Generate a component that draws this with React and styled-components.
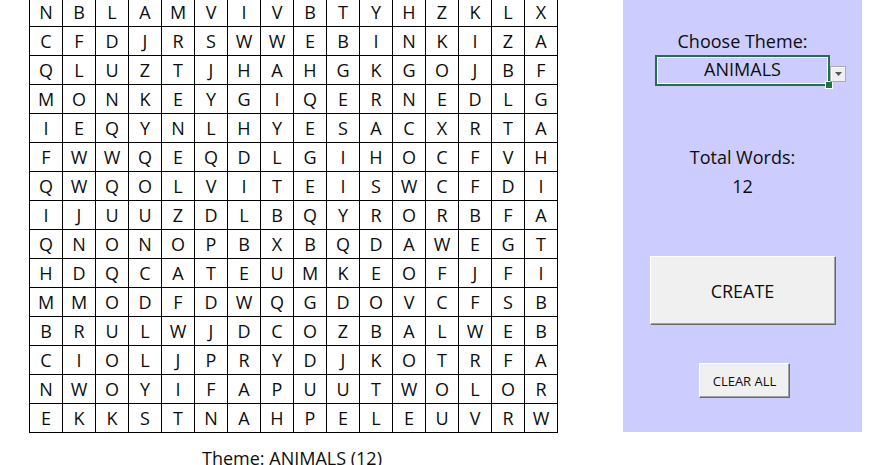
import React from "react";
import styled, { createGlobalStyle } from "styled-components";

const GlobalStyle = createGlobalStyle`
  html, body {
    margin: 0;
    padding: 0;
    background: #ffffff;
    overflow: hidden;
  }
  body {
    font-family: "Open Sans", "Liberation Sans", sans-serif;
    color: #0d0d0d;
  }
`;

const ROWS = [
  "NBLAMVIVBTYHZKLX",
  "CFDJRSWWEBINKIZA",
  "QLUZTJHAHGKGOJBF",
  "MONKEYGIQERNEDLG",
  "IEQYNLHYESACXRTA",
  "FWWQEQDLGIHOCFVH",
  "QWQOLVITEISWCFDI",
  "IJUUZDLBQYRORBFA",
  "QNONOPBXBQDAWEGT",
  "HDQCATEUMKEOFJFI",
  "MMODFDWQGDOVCFSB",
  "BRULWJDCOZBALWEB",
  "CIOLJPRYDJKOTRFA",
  "NWOYIFAPUUTWOLOR",
  "EKKSTNAHPELEUVRW",
];

const Page = styled.div`
  display: flex;
  align-items: flex-start;
  width: 885px;
  height: 465px;
  overflow: hidden;
`;

const PuzzleColumn = styled.div`
  display: flex;
  flex-direction: column;
  align-items: center;
  margin-left: 29px;
  margin-top: -3px;
`;

const Grid = styled.div`
  display: grid;
  grid-template-columns: repeat(16, 33px);
  grid-auto-rows: 29px;
  border-left: 1px solid #000;
  border-top: 1px solid #000;
`;

const Cell = styled.div`
  box-sizing: border-box;
  border-right: 1px solid #000;
  border-bottom: 1px solid #000;
  display: flex;
  align-items: center;
  justify-content: center;
  font-size: 18px;
  line-height: 28px;
  color: #0d0d0d;
`;

const Caption = styled.div`
  margin-top: 13px;
  margin-right: 3px;
  font-size: 18px;
  line-height: 25px;
  white-space: nowrap;
`;

const Panel = styled.div`
  margin-left: 65px;
  width: 239px;
  height: 432px;
  background: #ccccff;
  display: flex;
  flex-direction: column;
  align-items: center;
  padding-top: 29px;
  box-sizing: border-box;
`;

const Label = styled.div`
  font-size: 18px;
  line-height: ${(p) => p.$lh || 25}px;
  text-align: center;
  white-space: nowrap;
`;

const SelectWrap = styled.div`
  position: relative;
  margin-top: 1px;
`;

const SelectBox = styled.div`
  box-sizing: border-box;
  width: 175px;
  height: 31px;
  border: 2px solid #217346;
  box-shadow: inset 0 0 0 1px #ffffff;
  font-size: 18px;
  line-height: 25px;
  padding-bottom: 2px;
  text-align: center;
`;

const DropButton = styled.div`
  position: absolute;
  left: 175px;
  top: 11px;
  width: 16px;
  height: 16px;
  box-sizing: border-box;
  border: 1px solid #ababab;
  background: #f0f0f0;
  box-shadow: inset 1px 1px 0 #ffffff;
  display: flex;
  align-items: center;
  justify-content: center;
`;

const Handle = styled.div`
  position: absolute;
  left: 171px;
  top: 27px;
  width: 6px;
  height: 6px;
  background: #217346;
  box-shadow: 0 0 0 1px #ffffff;
`;

const TotalBlock = styled.div`
  margin-top: 57px;
  display: flex;
  flex-direction: column;
  align-items: center;
`;

const FormButton = styled.div`
  box-sizing: border-box;
  width: ${(p) => p.$w}px;
  height: ${(p) => p.$h}px;
  margin-top: ${(p) => p.$mt}px;
  margin-left: ${(p) => p.$ml || 0}px;
  background: #f0f0f0;
  border: 1px solid;
  border-color: #ffffff #696969 #696969 #ffffff;
  box-shadow: inset -1px -1px 0 #a0a0a0;
  display: flex;
  align-items: center;
  justify-content: center;
  font-size: ${(p) => p.$fs}px;
  color: #0d0d0d;
  white-space: nowrap;
`;

export default function App() {
  return (
    <>
      <GlobalStyle />
      <Page>
        <PuzzleColumn>
          <Grid>
            {ROWS.map((row, r) =>
              row.split("").map((ch, c) => <Cell key={`${r}-${c}`}>{ch}</Cell>)
            )}
          </Grid>
          <Caption>Theme: ANIMALS (12)</Caption>
        </PuzzleColumn>
        <Panel>
          <Label>Choose Theme:</Label>
          <SelectWrap>
            <SelectBox>ANIMALS</SelectBox>
            <Handle />
            <DropButton>
              <svg width="7" height="4" viewBox="0 0 7 4">
                <path d="M0 0 L7 0 L3.5 4 Z" fill="#555" />
              </svg>
            </DropButton>
          </SelectWrap>
          <TotalBlock>
            <Label $lh={29}>Total Words:</Label>
            <Label $lh={29}>12</Label>
          </TotalBlock>
          <FormButton $w={186} $h={69} $mt={55} $fs={18}>
            CREATE
          </FormButton>
          <FormButton $w={91} $h={35} $mt={38} $ml={4} $fs={13}>
            CLEAR ALL
          </FormButton>
        </Panel>
      </Page>
    </>
  );
}
